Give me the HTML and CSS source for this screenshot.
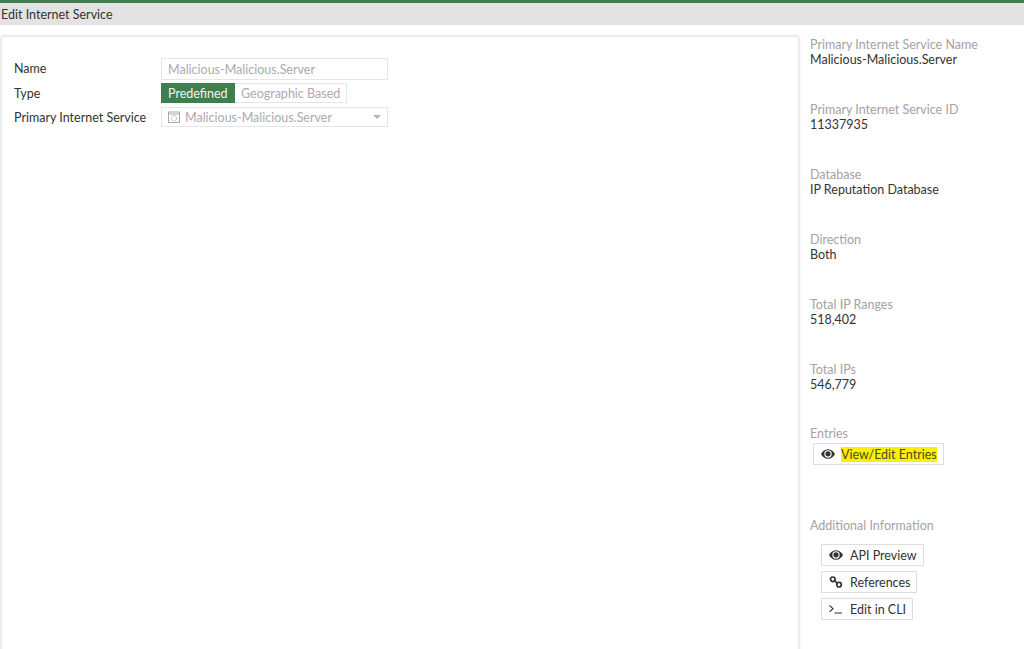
FILE: index.html
```html
<!DOCTYPE html>
<html lang="en">
<head>
<meta charset="utf-8">
<title>Edit Internet Service</title>
<link rel="stylesheet" href="styles.css">
</head>
<body>
<header class="title">Edit Internet Service</header>
<div class="main">
  <section class="card">
    <div class="row">
      <div class="label label-name">Name</div>
      <div class="input">Malicious-Malicious.Server</div>
    </div>
    <div class="row row-type">
      <div class="label">Type</div>
      <div class="toggle">
        <span class="opt on">Predefined</span><span class="opt">Geographic Based</span>
      </div>
    </div>
    <div class="row row-select">
      <div class="label">Primary Internet Service</div>
      <div class="input select">
        <svg class="svc" width="12" height="12" viewBox="0 0 12 12" fill="none" stroke="#a9a9a9" stroke-width="1"><rect x="0.5" y="1" width="11" height="10.500"/><path d="M0.500 3h11"/><circle cx="6" cy="7.300" r="2.600" stroke-dasharray="1.500 1"/></svg>
        <span class="select-text">Malicious-Malicious.Server</span>
        <span class="caret"></span>
      </div>
    </div>
  </section>
  <aside class="side">
    <div class="info"><div class="k">Primary Internet Service Name</div><div class="v">Malicious-Malicious.Server</div></div>
    <div class="info"><div class="k">Primary Internet Service ID</div><div class="v">11337935</div></div>
    <div class="info"><div class="k">Database</div><div class="v">IP Reputation Database</div></div>
    <div class="info"><div class="k">Direction</div><div class="v">Both</div></div>
    <div class="info"><div class="k">Total IP Ranges</div><div class="v">518,402</div></div>
    <div class="info"><div class="k">Total IPs</div><div class="v">546,779</div></div>
    <div class="entries">
      <div class="k">Entries</div>
      <div class="btn btn-entries">
        <svg class="ico ico-tight" width="14" height="10" viewBox="0 0 14 10"><path fill="#333" fill-rule="evenodd" d="M7 0.200C3.600 0.200 1.200 2.400 0 5c1.200 2.600 3.600 4.800 7 4.800s5.800-2.200 7-4.800C12.800 2.400 10.400 0.200 7 0.200zM7 1.300a3.700 3.700 0 1 1 0 7.400 3.700 3.700 0 0 1 0-7.400z"/><circle cx="7" cy="4.800" r="2.600" fill="#333"/></svg>
        <mark class="hl">View/Edit Entries</mark>
      </div>
    </div>
    <div class="additional">
      <div class="k">Additional Information</div>
      <div class="btns">
        <div class="btn">
          <svg class="ico" width="14" height="10" viewBox="0 0 14 10"><path fill="#333" fill-rule="evenodd" d="M7 0.200C3.600 0.200 1.200 2.400 0 5c1.200 2.600 3.600 4.800 7 4.800s5.800-2.200 7-4.800C12.800 2.400 10.400 0.200 7 0.200zM7 1.300a3.700 3.700 0 1 1 0 7.400 3.700 3.700 0 0 1 0-7.400z"/><circle cx="7" cy="4.800" r="2.600" fill="#333"/></svg>
          <span>API Preview</span>
        </div>
        <div class="btn">
          <svg class="ico" width="14" height="12" viewBox="0 0 14 12" fill="none" stroke="#333" stroke-width="1.700"><circle cx="3.800" cy="3.300" r="2.300"/><circle cx="10" cy="8.700" r="2.300"/><path d="M5.500 4.800l3 2.400"/></svg>
          <span>References</span>
        </div>
        <div class="btn">
          <svg class="ico" width="14" height="10" viewBox="0 0 14 10" fill="none" stroke="#333" stroke-width="1.100"><path d="M0.500 1.500l3.500 3.200-3.500 3.200M5.500 9H13"/></svg>
          <span>Edit in CLI</span>
        </div>
      </div>
    </div>
  </aside>
</div>
</body>
</html>
```
FILE: styles.css
```css
* { box-sizing: border-box; }
html, body { height: 100%; }
body {
  margin: 0;
  height: 649px;
  overflow: hidden;
  background: #fff;
  color: #333;
  font-family: Lato, "Open Sans", sans-serif;
  font-size: 12.500px;
  line-height: 15px;
}
.title {
  height: 25px;
  border-top: 3px solid #3f7f4f;
  background: #e3e3e3;
  padding: 4px 0 0 1px;
  color: #333;
}
.main { display: flex; height: 624px; }
.card {
  width: 796px;
  height: 640px;
  margin: 12px 0 0 2px;
  padding: 21px 0 0 12px;
  background: #fff;
  box-shadow: 0 0 3px 1px #d8d8d8;
}
.row { display: flex; align-items: center; height: 22px; }
.row-type { margin-top: 3px; height: 20px; }
.row-select { margin-top: 4px; height: 20px; }
.label { width: 147px; color: #333; }
.label-name { margin-top: -2px; }
.input {
  width: 227px;
  height: 100%;
  border: 1px solid #e6e6e6;
  padding: 0 6px;
  display: flex;
  align-items: center;
  color: #ababab;
}
.select { padding-left: 6px; }
.svc { margin-right: 5px; flex: none; }
.select-text { flex: 1; }
.caret {
  width: 0; height: 0;
  border-left: 4px solid transparent;
  border-right: 4px solid transparent;
  border-top: 4px solid #b5b5b5;
}
.toggle { display: flex; height: 100%; }
.opt {
  display: flex;
  align-items: center;
  padding: 0 6px;
  border: 1px solid #e6e6e6;
  border-left: 0;
  color: #ababab;
}
.opt.on {
  width: 74px;
  padding: 0 7px;
  background: #3f7f4f;
  border: 0;
  color: #f2f2f2;
}
.side { flex: 1; padding: 12px 0 0 12px; }
.info { height: 65px; }
.k { color: #a3a3a3; }
.v { color: #333; }
.entries { height: 92px; margin-top: -1px; }
.btn {
  display: inline-flex;
  align-items: center;
  height: 22px;
  padding: 0 6px 0 7px;
  border: 1px solid #dedede;
  background: #fff;
  color: #333;
  white-space: nowrap;
}
.btn-entries { display: flex; width: 131px; margin: 2px 0 0 3px; }
.ico { flex: none; margin-right: 7px; }
.ico-tight { margin-right: 6px; }
.hl { background: #fbf000; color: #4a4a20; }
.btns {
  display: flex;
  flex-direction: column;
  align-items: flex-start;
  gap: 5px;
  margin: 11px 0 0 11px;
}
```
